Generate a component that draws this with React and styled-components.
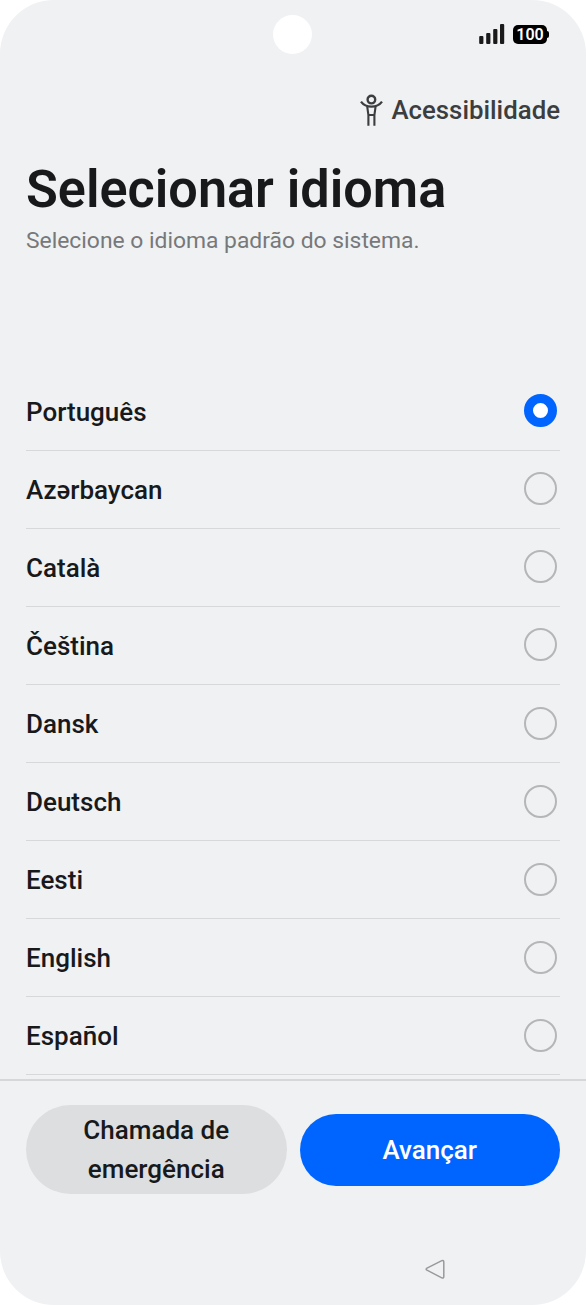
import React from "react";
import styled, { createGlobalStyle } from "styled-components";

const GlobalStyle = createGlobalStyle`
  * {
    box-sizing: border-box;
  }
  body {
    margin: 0;
    background: #fff;
    font-family: Roboto, "Noto Sans", sans-serif;
  }
`;
const Phone = styled.div`
  display: flex;
  flex-direction: column;
  width: 586px;
  height: 1305px;
  overflow: hidden;
  background: #eff1f3;
  border-radius: 54px;
`;
const StatusBar = styled.div`
  display: grid;
  grid-template-columns: 1fr 39px 1fr;
  align-items: center;
  flex: none;
  height: 68px;
  padding: 0 37px 0 36px;
`;
const Camera = styled.div`
  grid-column: 2;
  width: 39px;
  height: 39px;
  border-radius: 50%;
  background: #fff;
`;
const StatusIcons = styled.div`
  display: flex;
  justify-content: flex-end;
  align-items: center;
  gap: 8px;
`;
const Battery = styled.div`
  display: flex;
  align-items: center;
`;
const BatteryLevel = styled.span`
  width: 34px;
  height: 19px;
  border-radius: 5px;
  background: #000;
  color: #fff;
  font-size: 16px;
  font-weight: 600;
  line-height: 20px;
  text-align: center;
`;
const BatteryTip = styled.span`
  width: 2px;
  height: 7px;
  border-radius: 0 2px 2px 0;
  background: #000;
`;
const Accessibility = styled.div`
  display: flex;
  justify-content: flex-end;
  align-items: center;
  flex: none;
  gap: 8px;
  height: 84px;
  padding-right: 26px;
  color: #3c3d3f;
  font-size: 25.8px;
  font-weight: 500;
  line-height: 32px;
`;
const Header = styled.header`
  flex: none;
  height: 220px;
  padding: 0 26px;
`;
const Title = styled.h1`
  margin: 7px 0 0;
  color: #18191b;
  font-size: 52.2px;
  font-weight: 580;
  line-height: 62px;
`;
const Subtitle = styled.p`
  margin: 4px 0 0;
  color: #77787a;
  font-size: 22.85px;
  line-height: 31px;
`;
const List = styled.ul`
  flex: none;
  height: 707px;
  margin: 0;
  padding: 0.6px 26px 0;
  overflow: hidden;
  list-style: none;
`;
const Row = styled.li`
  display: flex;
  justify-content: space-between;
  align-items: center;
  height: 78.1px;
  padding-right: 3.5px;
  border-bottom: 1px solid #d6d8da;
  color: #18191b;
  font-size: 26px;
  font-weight: 500;
`;
const Label = styled.span`
  padding-top: 1px;
`;
const Radio = styled.span`
  width: 33px;
  height: 33px;
  margin-bottom: 1px;
  border: ${props => (props.$checked ? "9px solid #0065ff" : "2px solid #b5b6b8")};
  border-radius: 50%;
  background: ${props => (props.$checked ? "#fff" : "transparent")};
`;
const Footer = styled.footer`
  display: flex;
  align-items: center;
  flex: none;
  gap: 13px;
  height: 139px;
  padding: 0 26px;
  border-top: 2px solid #d6d7d9;
`;
const Button = styled.button`
  flex: 1;
  min-height: 72px;
  padding: 6px 40px 5px;
  border: 0;
  border-radius: 45px;
  background: ${props => (props.$primary ? "#0065ff" : "#dddee0")};
  color: ${props => (props.$primary ? "#fff" : "#18191b")};
  font-family: inherit;
  font-size: 26px;
  font-weight: 500;
  line-height: 39px;
`;
const NavBar = styled.nav`
  display: flex;
  justify-content: flex-end;
  padding: 40.5px 140.5px 0 0;
`;

const languages = [
  "Português",
  "Azərbaycan",
  "Català",
  "Čeština",
  "Dansk",
  "Deutsch",
  "Eesti",
  "English",
  "Español",
];

const Signal = () => (
  <svg width="26" height="20" viewBox="0 0 26 20" fill="#1a1a1b">
    <rect x="0.2" y="12" width="4.2" height="8" rx="1" />
    <rect x="7.2" y="9" width="4.2" height="11" rx="1" />
    <rect x="14.2" y="5" width="4.2" height="15" rx="1" />
    <rect x="21" y="0" width="4.2" height="20" rx="1" />
  </svg>
);

const Person = () => (
  <svg width="23" height="33" viewBox="0 0 23 33" fill="none" stroke="currentColor" strokeWidth="2.1">
    <circle cx="11.4" cy="5.6" r="3.8" strokeWidth="2.4" />
    <path d="M1 7.6C3.5 11 7 12.6 11.4 12.6S19.5 11 22 7.6" strokeWidth="2.3" />
    <path d="M7.2 12.3L8.4 21V31.8M15.6 12.3L14.4 21V31.8M8.4 21H14.4" />
  </svg>
);

const Back = () => (
  <svg width="21" height="21" viewBox="0 0 21 21" fill="none" stroke="#98999b" strokeWidth="1.5">
    <path d="M2 9.2L16.8 1.7Q18.8 1 18.8 3V17.6Q18.8 19.6 16.8 18.9L2 11.2Q0.3 10.2 2 9.2Z" />
  </svg>
);

export default () => {
  return (
    <>
    <GlobalStyle />
    <Phone>
      <StatusBar>
        <Camera />
        <StatusIcons>
          <Signal />
          <Battery>
            <BatteryLevel>100</BatteryLevel>
            <BatteryTip />
          </Battery>
        </StatusIcons>
      </StatusBar>
      <Accessibility>
        <Person />
        Acessibilidade
      </Accessibility>
      <Header>
        <Title>Selecionar idioma</Title>
        <Subtitle>Selecione o idioma padrão do sistema.</Subtitle>
      </Header>
      <List>
        {languages.map((language, i) => (
          <Row key={language}>
            <Label>{language}</Label>
            <Radio $checked={i === 0} />
          </Row>
        ))}
      </List>
      <Footer>
        <Button>Chamada de emergência</Button>
        <Button $primary>Avançar</Button>
      </Footer>
      <NavBar>
        <Back />
      </NavBar>
    </Phone>
    </>
  )
};
